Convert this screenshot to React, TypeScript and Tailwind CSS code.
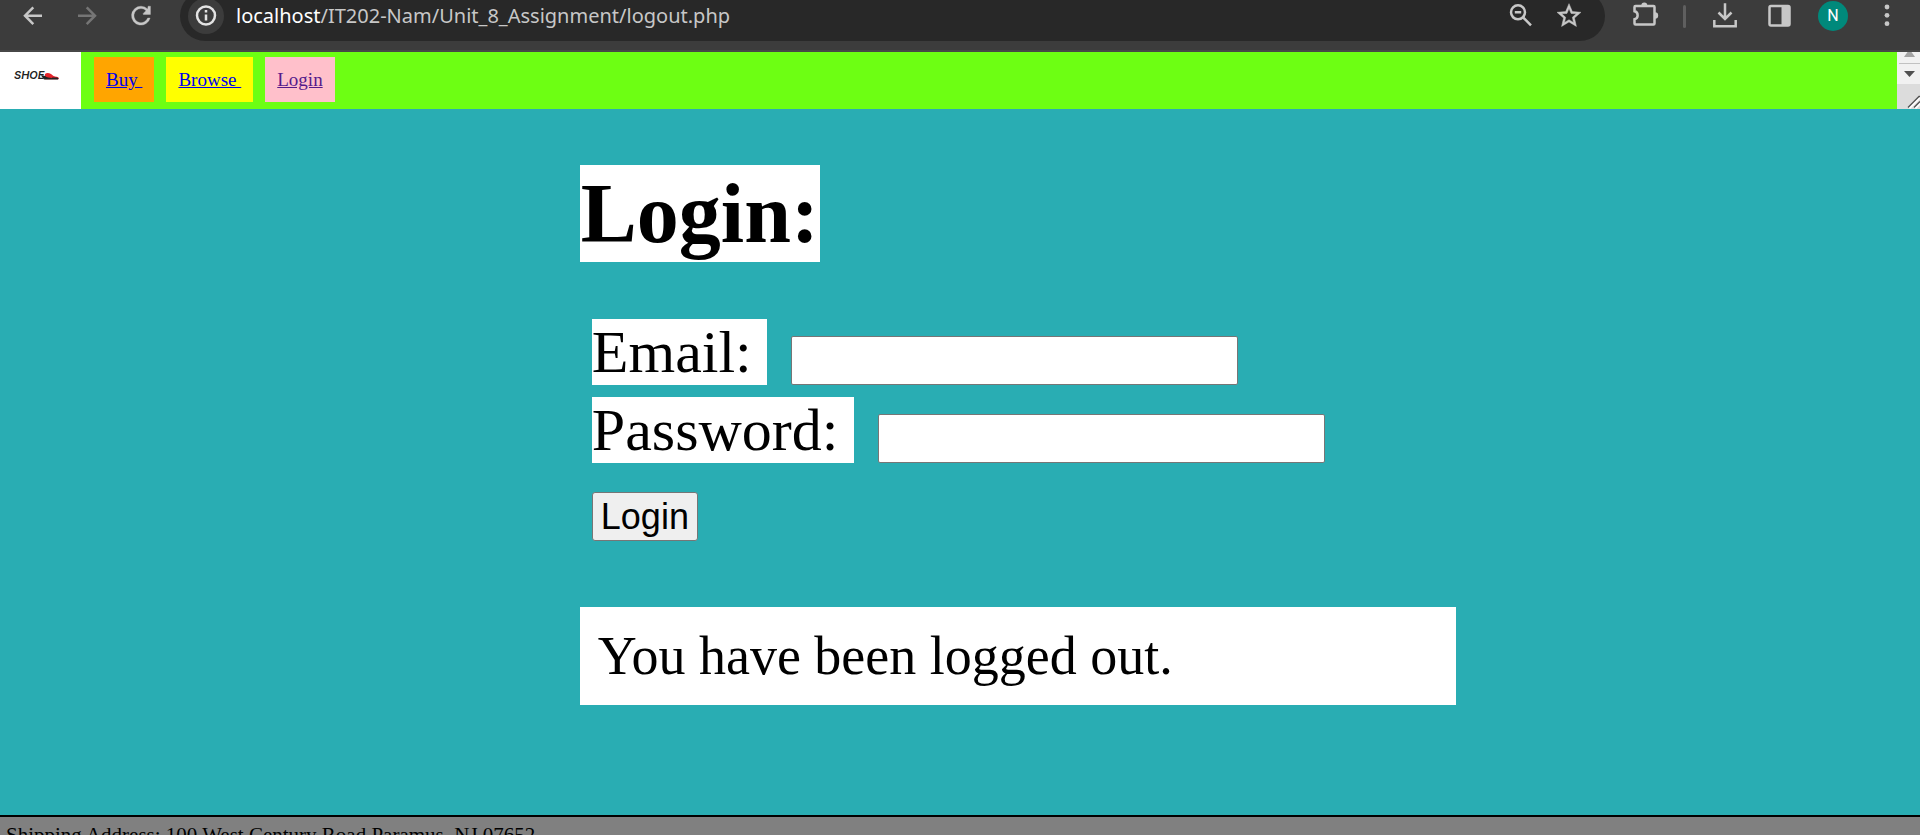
import type { ReactNode } from 'react';

function Icon({ children, className = 'text-[#c7c7c7]', viewBox = '0 0 30 30' }: { children: ReactNode; className?: string; viewBox?: string }) {
  return (
    <svg viewBox={viewBox} className={`size-[30px] shrink-0 ${className}`} fill="none" stroke="currentColor" strokeWidth="2.5" aria-hidden="true">
      {children}
    </svg>
  );
}

function BrowserBar() {
  return (
    <div className="h-[52px] shrink-0 overflow-hidden border-b-2 border-[#474747] bg-[#3c3c3c] pt-px font-['Noto_Sans',sans-serif]">
      <div className="flex h-[30px] items-center gap-6 px-[18px]">
        <button aria-label="Back">
          <Icon>
            <path d="M24 14.7H7.5M15.3 6.3 7 14.7l8.3 8.4" />
          </Icon>
        </button>
        <button aria-label="Forward">
          <Icon className="text-[#757575]">
            <path d="M6 14.7h16.5M14.7 6.3l8.3 8.4-8.3 8.4" />
          </Icon>
        </button>
        <button aria-label="Reload">
          <Icon viewBox="-0.7 -0.4 25.4 25.4">
            <path
              fill="currentColor"
              stroke="currentColor"
              strokeWidth="0.3"
              d="M17.65 6.35A7.958 7.958 0 0 0 12 4a8 8 0 1 0 7.73 10h-2.08A6 6 0 1 1 12 6c1.66 0 3.14.69 4.22 1.78L13.9 10.1v.9H20V4h-2z"
            />
          </Icon>
        </button>
        <div className="flex h-[50px] min-w-0 flex-1 items-center rounded-full bg-[#282828] pr-[21px] pl-2">
          <button aria-label="Site information" className="grid size-9 shrink-0 place-items-center rounded-full bg-[#3c3c3c]">
            <Icon className="text-[#e3e3e3]">
              <circle cx="15" cy="14.5" r="9" />
              <path d="M15 13.5v6M15 9v2.4" />
            </Icon>
          </button>
          <div className="ml-3 min-w-0 flex-1 truncate text-[20px] leading-[30px] text-[#c7c7c7]">
            <span className="text-white">localhost</span>/IT202-Nam/Unit_8_Assignment/logout.php
          </div>
          <div className="flex gap-[18px]">
            <button aria-label="Zoom">
              <Icon>
                <circle cx="12" cy="11.3" r="7" />
                <path d="m17 16.3 8 8M8.8 11.3h6.4" />
              </Icon>
            </button>
            <button aria-label="Bookmark">
              <Icon viewBox="-0.5 -0.2 25 25">
                <path
                  fill="currentColor"
                  stroke="currentColor"
                  strokeWidth="0.4"
                  d="m22 9.24-7.19-.62L12 2 9.19 8.63 2 9.24l5.46 4.73L5.82 21 12 17.27 18.18 21l-1.63-7.03zM12 15.4l-3.76 2.27 1-4.28-3.32-2.88 4.38-.38L12 6.1l1.71 4.04 4.38.38-3.32 2.88 1 4.28z"
                />
              </Icon>
            </button>
          </div>
        </div>
        <button aria-label="Extensions">
          <Icon>
            <path d="M6.5 5h18a1 1 0 0 1 1 1v16.5a1 1 0 0 1-1 1h-18a1 1 0 0 1-1-1v-4.2c4.2-.8 4.2-7.2 0-8V6a1 1 0 0 1 1-1z" />
            <path d="M12.3 4.5a3 3 0 0 1 6 0zM26 11.3a3.2 3.2 0 0 1 0 6.4z" fill="currentColor" stroke="none" />
          </Icon>
        </button>
        <div className="h-[23px] w-[3px] shrink-0 rounded-full bg-[#5f5f5f]" />
        <button aria-label="Downloads">
          <Icon>
            <path d="M15 2.3v15.5M8.5 11.5l6.500 6.5 6.5-6.5M4.3 19v6.300h21.400V19" />
          </Icon>
        </button>
        <button aria-label="Side panel">
          <Icon>
            <rect x="5.5" y="5" width="20" height="19.5" rx="1.5" />
            <path d="M17.5 5h8v19.5h-8z" fill="currentColor" stroke="none" />
          </Icon>
        </button>
        <button aria-label="Profile" className="grid size-[30px] shrink-0 place-items-center rounded-full bg-[#00897b] font-[Roboto,sans-serif] text-[16px] text-white">
          N
        </button>
        <button aria-label="Menu">
          <Icon>
            <g fill="currentColor" stroke="none">
              <circle cx="15" cy="6" r="2.4" />
              <circle cx="15" cy="14.3" r="2.4" />
              <circle cx="15" cy="22.7" r="2.4" />
            </g>
          </Icon>
        </button>
      </div>
    </div>
  );
}

function Logo() {
  return (
    <div className="flex w-[81px] shrink-0 justify-center bg-white">
      <svg width="53" height="57" viewBox="0 0 53 57" role="img" aria-label="Shoe store">
        <text x="0" y="27" className="fill-[#222] font-[Inter,sans-serif] text-[11px] font-semibold italic">
          SHOE
        </text>
        <path d="M31 22c1.500-1.500 4-1.200 6 0l2.500 2c2 .7 5 .8 5.300 2.200l-.4 1H31z" fill="#e5232b" />
        <path d="M27 23.500c2-.5 4 .5 5.500 1.500 2 1 4 .8 6 .6 2-.1 4-.3 6 .5l-.5 1.400H30z" fill="#222" />
        <path d="M34 23.500l4 2.200" stroke="#e5232b" strokeWidth="1.200" />
      </svg>
    </div>
  );
}

function HeaderScrollbar() {
  return (
    <svg width="23" height="57" viewBox="0 0 23 57" className="shrink-0" aria-hidden="true">
      <path d="M0 0h23v57H0z" fill="#dcdcdc" />
      <path d="M0 0h23v32H0z" fill="#f1f1f1" />
      <path d="M2 11h21v1H2z" fill="#c1c1c1" />
      <path d="m10.5 0h4l3.500 5H7z" fill="#a3a3a3" />
      <path d="M7 19h11l-5.500 6z" fill="#505050" />
      <path d="M12 56 23 45M18 56l5-5" stroke="#fff" strokeWidth="3" />
      <path d="M11 55.5 22 44.500h1M17 55.500l6-6" stroke="#505050" strokeWidth="1.3" fill="none" />
    </svg>
  );
}

function SiteHeader() {
  return (
    <header className="flex h-[57px] shrink-0 bg-[#6dff13] text-[19px] leading-[45px]">
      <Logo />
      <nav className="flex flex-1 items-start gap-3 px-[13px] pt-[5px] whitespace-pre">
        <a href="#buy" className="bg-[#ffa500] px-3 text-[#0000ee] underline">{'Buy '}</a>
        <a href="#browse" className="bg-[#ffff00] px-3 text-[#0000ee] underline">{'Browse '}</a>
        <a href="#login" className="bg-[#ffc0cb] px-3 text-[#551a8b] underline">Login</a>
      </nav>
      <HeaderScrollbar />
    </header>
  );
}

function Field({ id, label, type }: { id: string; label: string; type: string }) {
  return (
    <div className="flex items-end gap-6">
      <label htmlFor={id} className="bg-white text-[60px] leading-[66px] whitespace-pre">{label + ' '}</label>
      <input id={id} name={id} type={type} className="h-[49px] w-[447px] rounded-[2px] border border-[#767676] bg-white px-1 font-['Liberation_Sans',sans-serif] text-4xl" />
    </div>
  );
}

export default function App() {
  return (
    <div className="flex h-screen flex-col overflow-hidden bg-[#29adb3] font-['Liberation_Serif','Times_New_Roman',serif] text-black">
      <BrowserBar />
      <SiteHeader />
      <main className="ml-[30.2%] flex flex-1 flex-col items-start pt-14">
        <h1 className="bg-white px-px text-[84px] leading-[97px] font-bold">Login:</h1>
        <form className="mt-[57px] flex flex-col items-start gap-3 pl-3" onSubmit={(e) => e.preventDefault()}>
          <Field id="email" label="Email:" type="text" />
          <Field id="password" label="Password:" type="password" />
          <button type="submit" className="mt-[17px] h-[49px] rounded-[3px] border border-[#767676] bg-[#efefef] px-2 font-['Liberation_Sans',sans-serif] text-[36px] leading-[47px]">
            Login
          </button>
        </form>
        <p className="mt-[66px] w-[876px] max-w-full bg-white px-[18px] text-[54px] leading-[98px]">You have been logged out.</p>
      </main>
      <footer className="h-5 shrink-0 border-t-2 border-black bg-[#808080] px-[6px] pt-[5px] text-[21px] leading-[26px]">
        Shipping Address: 100 West Century Road Paramus, NJ 07652
      </footer>
    </div>
  );
}
